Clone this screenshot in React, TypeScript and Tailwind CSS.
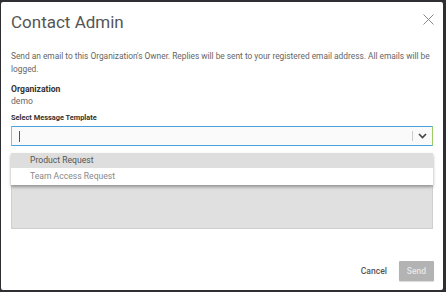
import React from 'react';

const font = { fontFamily: 'Roboto, "Liberation Sans", sans-serif' };

export default function App() {
  return (
    <div className="w-[446px] h-[292px] bg-[#2e2e33] pt-[2px] pl-[1px] pr-[3px] pb-[2px] overflow-hidden" style={font}>
      <div className="relative w-full h-full bg-white flex flex-col rounded-[2px]">
        {/* Header */}
        <div className="flex items-start justify-between pl-[10px] pr-[9px] pt-[8px] h-[46px]">
          <h2 className="text-[17px] leading-[24px] text-[#555] font-normal">Contact Admin</h2>
          <svg width="11" height="11" viewBox="0 0 11 11" className="mt-[4px]" stroke="#888" strokeWidth="1">
            <path d="M0.5 0.5 L10.5 10.5 M10.5 0.5 L0.5 10.5" />
          </svg>
        </div>

        {/* Body */}
        <div className="px-[10px] pt-[2px]">
          <p className="text-[8.4px] leading-[12.5px] text-[#666] tracking-[-0.02px]">
            Send an email to this Organization's Owner. Replies will be sent to your registered email address. All emails will be logged.
          </p>
          <div className="mt-[8px] text-[8.6px] leading-[12px] font-bold text-[#333]">Organization</div>
          <div className="text-[8.6px] leading-[12px] text-[#666]">demo</div>
          <div className="mt-[6px] text-[7.4px] leading-[10px] font-bold text-[#333]">Select Message Template</div>

          <div className="relative mt-[3px]">
            <div className="h-[20px] flex items-center bg-[#fafafa] border-y border-[#4aa3df] border-x border-x-[#9ccc65]">
              <span className="ml-[7px] w-px h-[11px] bg-[#555]" />
              <span className="ml-auto w-px h-[10px] bg-[#ccc]" />
              <svg width="9" height="6" viewBox="0 0 9 6" className="mx-[5px]" fill="none" stroke="#444" strokeWidth="1.6">
                <path d="M1 1 L4.5 4.5 L8 1" />
              </svg>
            </div>

            <div className="mt-[7px] h-[76px] bg-[#e0e0e0] border border-[#cfcfcf]" />

            {/* Dropdown menu */}
            <div className="absolute left-0 right-0 top-[27px] bg-white shadow-[0_2px_3px_rgba(0,0,0,0.35)] text-[8.6px]">
              <div className="h-[15px] flex items-center pl-[19px] bg-[#dedede] text-[#555]">Product Request</div>
              <div className="h-[17px] flex items-center pl-[19px] text-[#888]">Team Access Request</div>
            </div>
          </div>
        </div>

        {/* Footer */}
        <div className="mt-auto mb-[9px] mr-[9px] flex items-center justify-end gap-[12px]">
          <button className="text-[8.6px] font-medium text-[#555]">Cancel</button>
          <button className="w-[35px] h-[20px] bg-[#b3b3b3] text-[8.6px] font-medium text-[#e6e6e6] rounded-[1px] shadow-[0_1px_1px_rgba(0,0,0,0.15)]">Send</button>
        </div>
      </div>
    </div>
  );
}
